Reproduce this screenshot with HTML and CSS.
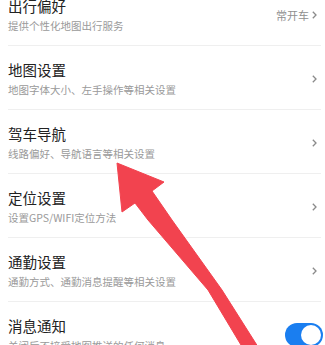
FILE: index.html
```html
<!DOCTYPE html>
<html lang="zh">
<head>
<meta charset="utf-8">
<link rel="stylesheet" href="styles.css">
</head>
<body>
<div class="list">
  <div class="row">
    <div class="texts"><div class="title">出行偏好</div><div class="sub">提供个性化地图出行服务</div></div>
    <div class="extra"><span class="value">常开车</span><svg class="chev" width="5" height="8" viewBox="0 0 5 8"><path d="M0.8 0.8 L4 4 L0.8 7.2" fill="none" stroke="#8a8a8a" stroke-width="1.3"/></svg></div>
  </div>
  <div class="row">
    <div class="texts"><div class="title">地图设置</div><div class="sub">地图字体大小、左手操作等相关设置</div></div>
    <div class="extra"><svg class="chev" width="5" height="8" viewBox="0 0 5 8"><path d="M0.8 0.8 L4 4 L0.8 7.2" fill="none" stroke="#8a8a8a" stroke-width="1.3"/></svg></div>
  </div>
  <div class="row">
    <div class="texts"><div class="title">驾车导航</div><div class="sub">线路偏好、导航语言等相关设置</div></div>
    <div class="extra"><svg class="chev" width="5" height="8" viewBox="0 0 5 8"><path d="M0.8 0.8 L4 4 L0.8 7.2" fill="none" stroke="#8a8a8a" stroke-width="1.3"/></svg></div>
  </div>
  <div class="row">
    <div class="texts"><div class="title">定位设置</div><div class="sub">设置GPS/WIFI定位方法</div></div>
    <div class="extra"><svg class="chev" width="5" height="8" viewBox="0 0 5 8"><path d="M0.8 0.8 L4 4 L0.8 7.2" fill="none" stroke="#8a8a8a" stroke-width="1.3"/></svg></div>
  </div>
  <div class="row">
    <div class="texts"><div class="title">通勤设置</div><div class="sub">通勤方式、通勤消息提醒等相关设置</div></div>
    <div class="extra"><svg class="chev" width="5" height="8" viewBox="0 0 5 8"><path d="M0.8 0.8 L4 4 L0.8 7.2" fill="none" stroke="#8a8a8a" stroke-width="1.3"/></svg></div>
  </div>
  <div class="row">
    <div class="texts"><div class="title">消息通知</div><div class="sub">关闭后不接受地图推送的任何消息</div></div>
    <div class="extra"><div class="toggle"><div class="knob"></div></div></div>
  </div>
</div>
<svg class="arrow" width="325" height="345" viewBox="0 0 325 345">
  <polygon points="117,163 164,182 152,191 172,220 222,290 260,350 244,350 208,290 148,220 135,203 122,212" fill="#f2434f" stroke="#f2434f" stroke-width="1" stroke-linejoin="round"/>
</svg>
</body>
</html>
```
FILE: styles.css
```css
html, body {
  margin: 0;
  padding: 0;
  background: #ffffff;
  overflow: hidden;
  width: 325px;
  height: 345px;
}
body {
  font-family: "Noto Sans CJK SC", "Noto Sans", sans-serif;
  position: relative;
}
.list {
  margin-top: -18px;
}
.row {
  display: flex;
  align-items: center;
  margin: 0 4px 0 8px;
  padding: 14px 4px 12px 0;
  border-bottom: 1px solid #efefef;
}
.texts {
  flex: 1;
  display: flex;
  flex-direction: column;
  gap: 3px;
}
.title {
  font-size: 14.5px;
  line-height: 20px;
  color: #222222;
}
.sub {
  font-size: 10.5px;
  line-height: 14px;
  color: #9a9a9a;
  white-space: nowrap;
}
.extra {
  display: flex;
  align-items: center;
  gap: 3px;
}
.value {
  font-size: 11px;
  line-height: 14px;
  color: #8f8f8f;
}
.chev {
  display: block;
}
.toggle {
  width: 38px;
  height: 24px;
  border-radius: 12px;
  background: #1a7ef0;
  margin-right: -6px;
  display: flex;
  align-items: center;
  justify-content: flex-end;
  padding: 0 2px;
  box-sizing: border-box;
}
.knob {
  width: 20px;
  height: 20px;
  border-radius: 50%;
  background: #ffffff;
}
.arrow {
  position: absolute;
  left: 0;
  top: 0;
}
```
